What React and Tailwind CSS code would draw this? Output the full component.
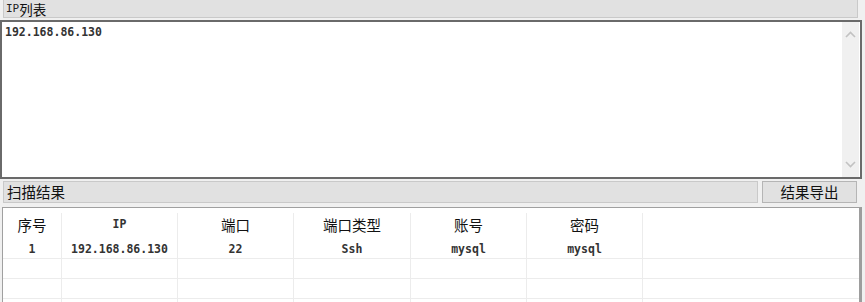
import React from "react";

const cjk = { fontFamily: '"Noto Sans CJK SC", "Noto Sans", sans-serif' };
const mono = { fontFamily: '"DejaVu Sans Mono", "Liberation Mono", monospace' };

const cols = [
  { w: "w-[59px]", h: "序号", v: "1" },
  { w: "w-[116px]", h: "IP", v: "192.168.86.130" },
  { w: "w-[116px]", h: "端口", v: "22" },
  { w: "w-[117px]", h: "端口类型", v: "Ssh" },
  { w: "w-[116px]", h: "账号", v: "mysql" },
  { w: "w-[116px]", h: "密码", v: "mysql" },
];

function Chevron({ up }) {
  return (
    <svg width="11" height="7" viewBox="0 0 11 7">
      <path
        d={up ? "M1 6 L5.5 1.5 L10 6" : "M1 1 L5.5 5.5 L10 1"}
        fill="none"
        stroke="#c2c2c2"
        strokeWidth="1.6"
      />
    </svg>
  );
}

export default function App() {
  return (
    <div className="w-[865px] h-[302px] bg-[#f0f0f0] overflow-hidden flex flex-col">
      {/* IP list label */}
      <div
        className="ml-[3px] w-[855px] h-[18px] bg-[#e1e1e1] border border-[#c9c9c9] border-t-0 flex items-center pl-[2px] text-[13.5px] leading-[16px] text-[#111]"
        style={cjk}
      >
        <span className="text-[11px] leading-[16px] text-[#222]" style={mono}>IP</span>
        <span className="leading-[16px]">列表</span>
      </div>

      {/* textarea */}
      <div className="mt-[2px] w-[862px] h-[159px] bg-white border-2 border-[#6a6a6a] flex">
        <div className="flex-1 pl-[3px] pt-[3px]">
          <div className="text-[11.5px] font-bold text-[#333] leading-[14px]" style={mono}>
            192.168.86.130
          </div>
        </div>
        <div className="w-[17px] bg-[#f0f0f0] flex flex-col items-center justify-between py-[9px] mr-[1px]">
          <Chevron up />
          <Chevron />
        </div>
      </div>

      {/* scan results row */}
      <div className="mt-[2px] h-[22px] flex items-stretch">
        <div
          className="ml-[3px] w-[755px] bg-[#e1e1e1] border border-[#c9c9c9] flex items-center pl-[3px] text-[14.5px] leading-none text-[#111]"
          style={cjk}
        >
          扫描结果
        </div>
        <div
          className="ml-[4px] w-[95px] bg-[#e1e1e1] border border-[#b5b5b5] flex items-center justify-center text-[14.5px] leading-none text-[#111]"
          style={cjk}
        >
          结果导出
        </div>
      </div>

      {/* table */}
      <div className="mt-[4px] ml-[2px] w-[860px] flex-1 bg-white border-l border-t border-[#a0a0a0] border-r-[3px] border-r-[#9d9d9d] flex flex-col">
        <div className="h-[31px] flex">
          {cols.map((c, i) => (
            <div key={i} className={`${c.w} flex flex-col`}>
              <div className="h-[5px]" />
              <div
                className="flex-1 flex items-center justify-center pb-[2px] border-r border-[#ececec] text-[14.5px] text-[#111] leading-none"
                style={c.h === "IP" ? mono : cjk}
              >
                {c.h === "IP" ? <span className="text-[11.5px] font-bold text-[#333]">IP</span> : c.h}
              </div>
            </div>
          ))}
          <div className="flex-1" />
        </div>
        <div className="h-[20px] flex border-b border-[#ececec]">
          {cols.map((c, i) => (
            <div
              key={i}
              className={`${c.w} flex items-center justify-center pt-[3px] border-r border-[#ececec] text-[11.5px] font-bold text-[#333]`}
              style={mono}
            >
              {c.v}
            </div>
          ))}
          <div className="flex-1" />
        </div>
        {[0, 1].map((r) => (
          <div key={r} className="h-[20px] flex border-b border-[#ececec]">
            {cols.map((c, i) => (
              <div key={i} className={`${c.w} border-r border-[#ececec]`} />
            ))}
            <div className="flex-1" />
          </div>
        ))}
        <div className="flex-1 flex">
          {cols.map((c, i) => (
            <div key={i} className={`${c.w} border-r border-[#ececec]`} />
          ))}
        </div>
      </div>
    </div>
  );
}
